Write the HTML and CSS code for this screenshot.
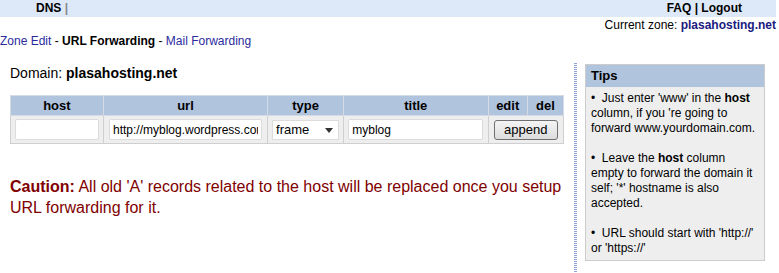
FILE: index.html
```html
<!DOCTYPE html>
<html>
<head>
  <title>URL Forwarding</title>
  <link rel="stylesheet" href="styles.css">
</head>
<body>
  <div class="page">
    <div class="topbar">
      <span class="topbar-left">DNS <span class="sep">|</span></span>
      <span class="topbar-right">FAQ | Logout</span>
    </div>
    <div class="zone">Current zone: <a href="#" class="zone-name">plasahosting.net</a></div>
    <div class="subnav">
      <a href="#">Zone Edit</a> - <b>URL Forwarding</b> - <a href="#">Mail Forwarding</a>
    </div>

    <div class="main">
      <div class="content">
        <div class="domain">Domain: <b>plasahosting.net</b></div>

        <table class="fwd-table">
          <tr>
            <th class="c-host">host</th>
            <th class="c-url">url</th>
            <th class="c-type">type</th>
            <th class="c-title">title</th>
            <th class="c-edit">edit</th>
            <th class="c-del">del</th>
          </tr>
          <tr>
            <td><input type="text" class="in-host"></td>
            <td><input type="text" class="in-url" value="http://myblog.wordpress.com"></td>
            <td>
              <span class="select-wrap">
                <select class="in-type">
                  <option>frame</option>
                  <option>redirect</option>
                </select>
              </span>
            </td>
            <td><input type="text" class="in-title" value="myblog"></td>
            <td colspan="2"><button class="btn-append">append</button></td>
          </tr>
        </table>

        <p class="caution"><b>Caution:</b> All old 'A' records related to the host will be replaced once you setup URL forwarding for it.</p>
      </div>

      <div class="sidebar">
        <div class="tips">
          <div class="tips-head">Tips</div>
          <div class="tips-body">
            <p>&bull;&nbsp; Just enter 'www' in the <b>host</b> column, if you 're going to forward www.yourdomain.com.</p>
            <p>&bull;&nbsp; Leave the <b>host</b> column empty to forward the domain it self; '*' hostname is also accepted.</p>
            <p>&bull;&nbsp; URL should start with 'http://' or 'https://'</p>
          </div>
        </div>
      </div>
    </div>
  </div>
</body>
</html>
```

FILE: styles.css
```css
body {
  margin: 0;
  font-family: "Liberation Sans", Arial, sans-serif;
  font-size: 12px;
  color: #000;
  background-color: #fff;
}

.page {
  margin-right: 3px;
}

a {
  color: #2a2a9e;
  text-decoration: none;
}

.topbar {
  display: flex;
  justify-content: space-between;
  height: 17px;
  line-height: 17px;
  background-color: #dde9f8;
  font-weight: bold;
  padding: 0 34px 0 36px;
}

.topbar .sep {
  color: #888;
}

.zone {
  text-align: right;
  line-height: 16px;
}

.zone-name {
  font-weight: bold;
  color: #1a1a80;
}

.subnav {
  margin-top: 1px;
  line-height: 14px;
}

.main {
  display: flex;
  margin-top: 15px;
}

.content {
  width: 564px;
  padding: 2px 0 0 10px;
}

.domain {
  font-size: 14px;
  line-height: 16px;
  margin-bottom: 14px;
}

.fwd-table {
  width: 554px;
  border-collapse: collapse;
  border: 1px solid #cfcfcf;
}

.fwd-table th {
  background-color: #b0c4de;
  font-size: 13px;
  height: 19px;
  padding: 0;
  border: 1px solid #d4dbe4;
  text-align: center;
}

.fwd-table td {
  background-color: #eeeeee;
  height: 27px;
  padding: 0;
  border: 1px solid #cfcfcf;
  text-align: center;
}

.c-host { width: 93px; }
.c-url { width: 165px; }
.c-type { width: 76px; }
.c-title { width: 145px; }
.c-edit { width: 39px; }
.c-del { width: 36px; }

.fwd-table input {
  box-sizing: border-box;
  height: 21px;
  border: 1px solid #dcdcdc;
  border-radius: 2px;
  background-color: #fff;
  font-family: "Liberation Sans", Arial, sans-serif;
  font-size: 12px;
  padding: 0 3px;
  vertical-align: middle;
}

.in-host { width: 84px; }
.in-url { width: 153px; }
.in-title { width: 135px; }

.select-wrap {
  position: relative;
  display: inline-block;
  vertical-align: middle;
}

.in-type {
  appearance: none;
  -webkit-appearance: none;
  box-sizing: border-box;
  width: 67px;
  height: 20px;
  border: 1px solid #dcdcdc;
  background-color: #fff;
  font-family: "Liberation Sans", Arial, sans-serif;
  font-size: 13px;
  padding: 0 3px;
  border-radius: 0;
}

.select-wrap::after {
  content: "";
  position: absolute;
  right: 6px;
  top: 8px;
  border-left: 4px solid transparent;
  border-right: 4px solid transparent;
  border-top: 5px solid #333;
  pointer-events: none;
}

.btn-append {
  box-sizing: border-box;
  width: 64px;
  height: 20px;
  border: 1px solid #707070;
  border-radius: 3px;
  background: linear-gradient(#f4f4f4, #dcdcdc);
  font-family: "Liberation Sans", Arial, sans-serif;
  font-size: 13px;
  padding: 0;
  vertical-align: middle;
}

.caution {
  width: 554px;
  margin: 32px 0 0 0;
  font-size: 16px;
  line-height: 21px;
  color: #800000;
}

.sidebar {
  width: 191px;
  padding-left: 11px;
  background: repeating-linear-gradient(to bottom, #8fa3d8 0, #8fa3d8 1px, #fff 1px, #fff 2px) left top / 3px 100% no-repeat;
  padding-top: 1px;
  min-height: 210px;
}

.tips {
  width: 178px;
  border: 1px solid #cccccc;
  background-color: #eeeeee;
}

.tips-head {
  background-color: #b0c4de;
  font-weight: bold;
  font-size: 13px;
  height: 22px;
  line-height: 22px;
  padding-left: 5px;
}

.tips-body {
  padding: 4px 5px 4px 5px;
  line-height: 15px;
}

.tips-body p {
  margin: 0 0 15px 0;
}

.tips-body p:last-child {
  margin-bottom: 0;
}
```
